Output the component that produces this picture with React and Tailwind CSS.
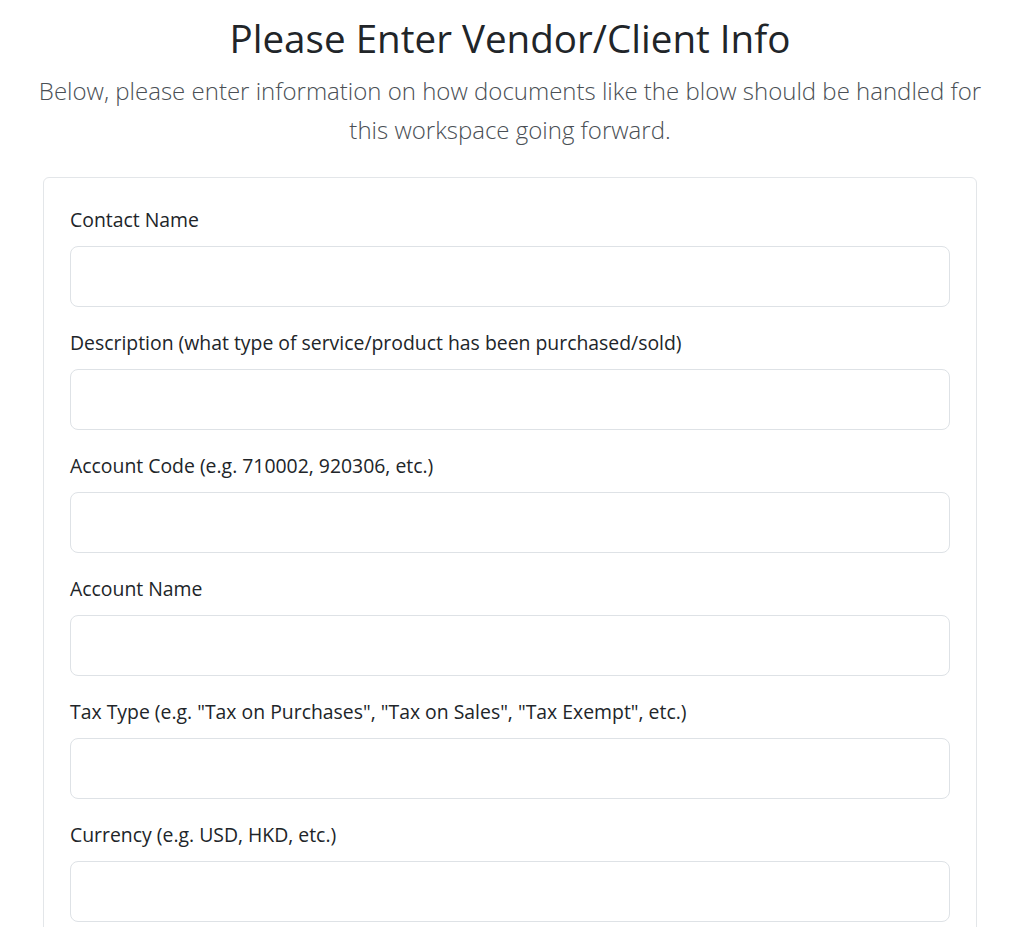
const FIELDS = [
  "Contact Name",
  "Description (what type of service/product has been purchased/sold)",
  "Account Code (e.g. 710002, 920306, etc.)",
  "Account Name",
  'Tax Type (e.g. "Tax on Purchases", "Tax on Sales", "Tax Exempt", etc.)',
  "Currency (e.g. USD, HKD, etc.)",
];

export default function App() {
  return (
    <div className="min-h-screen bg-white font-['Open_Sans',sans-serif] text-[#212529]">
      <div className="ml-[43px] w-[934px] pt-[14px]">
        {/* Heading */}
        <h1 className="text-center text-[38.6px] leading-[48px] font-normal">
          Please Enter Vendor/Client Info
        </h1>
        <p className="-mx-[12px] mt-[9px] text-center text-[24px] leading-[39px] font-light text-[#4a4f55]">
          Below, please enter information on how documents like the blow should be handled for this workspace going forward.
        </p>

        {/* Form card */}
        <div className="mt-[28px] border border-[#e3e6e9] rounded-[6px] px-[26px] pt-[28px] pb-[20px]">
          {FIELDS.map((label) => (
            <div key={label} className="mb-[22px]">
              <label className="block text-[19.4px] leading-[28px] mb-[12px]">{label}</label>
              <input
                type="text"
                className="block w-full h-[61px] border border-[#dee2e6] rounded-[8px] px-4 text-[19px] outline-none"
              />
            </div>
          ))}
        </div>
      </div>
    </div>
  );
}
